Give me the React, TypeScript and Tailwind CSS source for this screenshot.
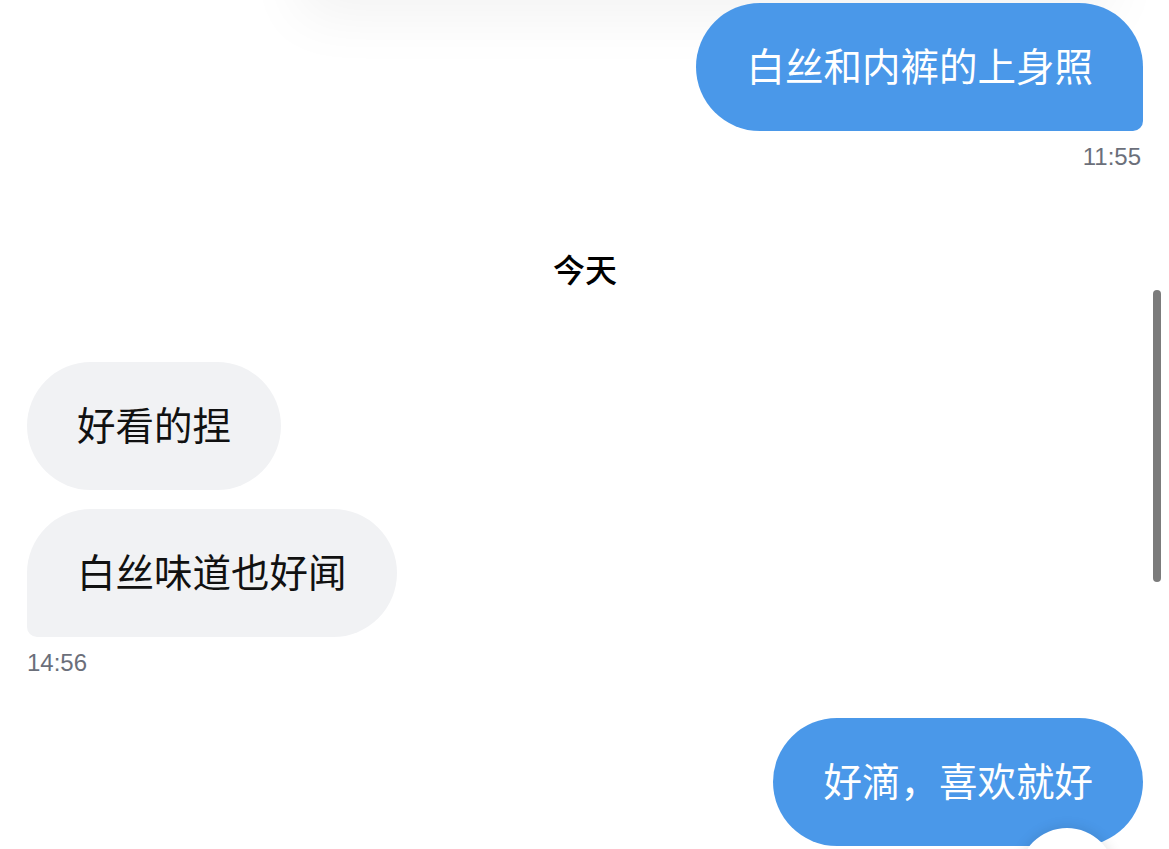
import React from 'react'

const cjk = { fontFamily: '"Noto Sans CJK SC", "Noto Sans", sans-serif' }

const Bubble: React.FC<{ text: string; mine?: boolean; corner?: string }> = ({ text, mine, corner }) => {
  const base = mine ? 'bg-[#4a98e9] text-white' : 'bg-[#f1f2f4] text-[#111111]'
  return (
    <div
      className={`h-[128px] flex items-center px-[50px] pb-[6px] text-[38.5px] leading-none rounded-[64px] ${base} ${corner ?? ''}`}
      style={cjk}
    >
      {text}
    </div>
  )
}

const Time: React.FC<{ value: string; className?: string }> = ({ value, className }) => (
  <p className={`text-[24px] leading-[24px] text-[#6b6f7a] font-['Liberation_Sans',sans-serif] ${className ?? ''}`}>{value}</p>
)

export default function App() {
  return (
    <div className="relative w-[1169px] h-[849px] overflow-hidden bg-white">
      {/* shadow of the header sitting just above the view */}
      <div className="absolute -top-[100px] left-[300px] right-[60px] h-[100px] bg-white shadow-[0_16px_60px_rgba(0,0,0,0.055)]" />

      <div className="relative flex flex-col pl-[27px] pr-[26px]">
        <div className="flex flex-col items-end mt-[3px]">
          <Bubble text="白丝和内裤的上身照" mine corner="rounded-br-[10px]" />
          <Time value="11:55" className="mt-[14px] mr-[2px]" />
        </div>

        <p className="self-center mt-[83px] text-[32px] leading-[32px] font-medium text-black" style={cjk}>
          今天
        </p>

        <div className="flex flex-col items-start mt-[78px]">
          <Bubble text="好看的捏" />
          <div className="mt-[19px]">
            <Bubble text="白丝味道也好闻" corner="rounded-bl-[10px]" />
          </div>
          <Time value="14:56" className="mt-[14px]" />
        </div>

        <div className="flex flex-col items-end mt-[43px]">
          <Bubble text="好滴，喜欢就好" mine />
        </div>
      </div>

      {/* scrollbar */}
      <div className="absolute left-[1153px] top-[290px] w-[8px] h-[292px] rounded-full bg-[#7b7b7b]" />

      {/* floating round button peeking from the bottom */}
      <div className="absolute left-[1019px] top-[828px] w-[96px] h-[96px] rounded-full bg-white shadow-[0_0_14px_rgba(0,0,0,0.12)]" />
    </div>
  )
}
